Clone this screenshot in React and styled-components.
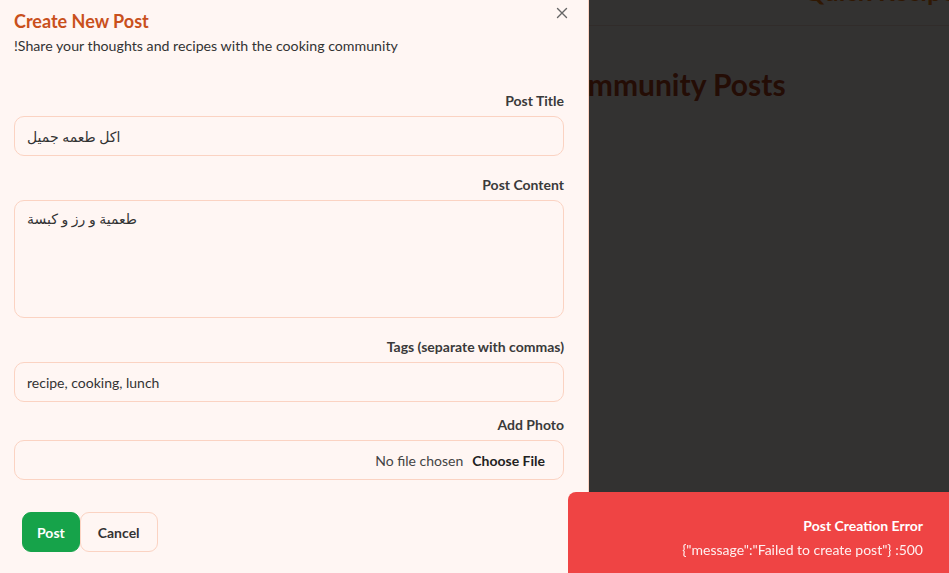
import React from "react";
import styled, { createGlobalStyle } from "styled-components";

const Global = createGlobalStyle`
  html, body { margin: 0; padding: 0; height: 100%; overflow: hidden; }
  body { font-family: Lato, "DejaVu Sans", sans-serif; background: #fff; }
  #root { height: 100%; }
  * { box-sizing: border-box; }
`;

const Page = styled.div`
  height: 100vh;
  background: #fff8f5;
`;

const Header = styled.header`
  height: 26px;
  border-bottom: 1px solid #f3ddd2;
  display: flex;
  justify-content: flex-end;
  overflow: hidden;
`;

const Brand = styled.div`
  font-size: 26px;
  font-weight: 700;
  color: #f07a10;
  margin-top: -25px;
  margin-right: -18px;
  white-space: nowrap;
`;

const PageTitle = styled.h1`
  margin: 0;
  padding: 40px 0 0 551px;
  font-size: 30px;
  font-weight: 700;
  color: #b4411c;
`;

const Overlay = styled.div`
  position: fixed;
  inset: 0;
  background: rgba(0, 0, 0, 0.8);
`;

const Sheet = styled.aside`
  position: fixed;
  top: 0;
  left: 0;
  bottom: 0;
  width: 589px;
  background: #fff6f3;
  border-right: 1px solid #fbd3c2;
  padding: 10px 24px 0 14px;
  display: flex;
  flex-direction: column;
`;

const Close = styled.button`
  position: absolute;
  top: 7px;
  right: 20px;
  width: 12px;
  height: 12px;
  padding: 0;
  border: 0;
  background: transparent;
  color: #666;
  display: flex;
`;

const Title = styled.h2`
  margin: 0;
  font-size: 18px;
  line-height: 22px;
  font-weight: 700;
  color: #c9501c;
`;

const Subtitle = styled.p`
  margin: 4px 0 0;
  font-size: 14.2px;
  line-height: 20px;
  color: #333;
`;

const Field = styled.div`
  display: flex;
  flex-direction: column;
  margin-top: ${(p) => p.$gap}px;
`;

const Label = styled.label`
  text-align: right;
  font-size: 14px;
  line-height: 20px;
  font-weight: 700;
  color: #3a3a3a;
  margin-bottom: 5px;
`;

const Input = styled.input`
  height: 40px;
  width: 100%;
  border: 1px solid #fbd3c2;
  border-radius: 10px;
  background: #fff6f3;
  padding: 0 12px;
  font: inherit;
  font-size: 14px;
  color: #333;
  outline: none;
`;

const TextArea = styled.textarea`
  height: 118px;
  width: 100%;
  border: 1px solid #fbd3c2;
  border-radius: 10px;
  background: #fff6f3;
  padding: 8px 12px;
  font: inherit;
  font-size: 14px;
  line-height: 20px;
  color: #333;
  resize: none;
  outline: none;
`;

const FileBox = styled.div`
  height: 40px;
  border: 1px solid #fbd3c2;
  border-radius: 10px;
  display: flex;
  align-items: center;
  justify-content: flex-end;
  gap: 9px;
  padding: 0 18px 0 12px;
  font-size: 14px;
`;

const NoFile = styled.span`
  color: #444;
`;

const ChooseFile = styled.span`
  font-weight: 700;
  color: #222;
`;

const Actions = styled.div`
  display: flex;
  margin-top: 32px;
  padding-left: 8px;
`;

const Button = styled.button`
  height: 40px;
  padding: 0 ${(p) => (p.$primary ? 14 : 17)}px;
  border-radius: 9px;
  font: inherit;
  font-size: 14px;
  font-weight: 700;
  border: 1px solid ${(p) => (p.$primary ? "#16a34a" : "#fbd3c2")};
  background: ${(p) => (p.$primary ? "#16a34a" : "#fff6f3")};
  color: ${(p) => (p.$primary ? "#fff" : "#333")};
`;

const Toast = styled.div`
  position: fixed;
  left: 568px;
  right: 0;
  bottom: 0;
  height: 81px;
  background: #ef4444;
  border-top-left-radius: 8px;
  padding: 25px 26px 0 0;
  text-align: right;
  color: #fff;
  font-size: 14px;
`;

const ToastTitle = styled.div`
  font-weight: 700;
  line-height: 18px;
`;

const ToastMsg = styled.div`
  margin-top: 6px;
  line-height: 18px;
  opacity: 0.92;
`;

export default function App() {
  return (
    <>
      <Global />
      <Page>
        <Header>
          <Brand>Quick Recipes</Brand>
        </Header>
        <PageTitle>Community Posts</PageTitle>
      </Page>
      <Overlay />
      <Sheet>
        <Close aria-label="Close">
          <svg width="12" height="12" viewBox="0 0 12 12" fill="none" stroke="currentColor" strokeWidth="1.4" strokeLinecap="round">
            <path d="M1.5 1.5 L10.5 10.5 M10.5 1.5 L1.5 10.5" />
          </svg>
        </Close>
        <Title>Create New Post</Title>
        <Subtitle>!Share your thoughts and recipes with the cooking community</Subtitle>
        <Field $gap={35}>
          <Label>Post Title</Label>
          <Input defaultValue="اكل طعمه جميل" />
        </Field>
        <Field $gap={19}>
          <Label>Post Content</Label>
          <TextArea defaultValue="طعمية و رز و كبسة" />
        </Field>
        <Field $gap={19}>
          <Label>Tags (separate with commas)</Label>
          <Input defaultValue="recipe, cooking, lunch" />
        </Field>
        <Field $gap={13}>
          <Label>Add Photo</Label>
          <FileBox>
            <NoFile>No file chosen</NoFile>
            <ChooseFile>Choose File</ChooseFile>
          </FileBox>
        </Field>
        <Actions>
          <Button $primary>Post</Button>
          <Button>Cancel</Button>
        </Actions>
      </Sheet>
      <Toast>
        <ToastTitle>Post Creation Error</ToastTitle>
        <ToastMsg>{'{"message":"Failed to create post"} :500'}</ToastMsg>
      </Toast>
    </>
  );
}
